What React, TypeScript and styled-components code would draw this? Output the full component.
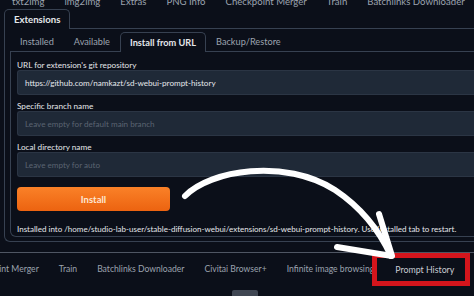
import styled, { createGlobalStyle } from 'styled-components';

const GlobalStyle = createGlobalStyle`
  html, body {
    margin: 0;
    padding: 0;
    background: #0b0f19;
    overflow: hidden;
  }
  body {
    font-family: Lato, "Noto Sans", sans-serif;
    color: #e5e7eb;
  }
`;

const Page = styled.div`
  position: relative;
  width: 474px;
  height: 296px;
  overflow: hidden;
  background: #0b0f19;
`;

const TabStrip = styled.div<{ $offset: number; $height: number }>`
  display: flex;
  align-items: center;
  margin-left: ${p => p.$offset}px;
  height: ${p => p.$height}px;
  white-space: nowrap;
`;

const TopStrip = styled(TabStrip)`
  margin-top: -7px;
`;

const TabItem = styled.div<{ $size?: number }>`
  padding: 0 10px;
  font-size: ${p => p.$size ?? 9.2}px;
  color: #9ca3af;
  flex-shrink: 0;
`;

const ExtRow = styled.div`
  display: flex;
  height: 20px;
  margin-left: 4px;
`;

const SelectedTab = styled.div<{ $size?: number }>`
  display: flex;
  align-items: center;
  padding: 0 9px;
  border: 1px solid #374151;
  border-bottom: none;
  border-radius: 5px 5px 0 0;
  font-size: ${p => p.$size ?? 9.2}px;
  font-weight: 700;
  color: #e5e7eb;
  flex-shrink: 0;
`;

const TabFill = styled.div`
  flex: 1;
  border-bottom: 1px solid #374151;
`;

const OuterPanel = styled.div`
  margin-left: 4px;
  width: 560px;
  height: 213px;
  border-left: 1px solid #374151;
  border-bottom: 1px solid #374151;
  border-bottom-left-radius: 6px;
  padding: 3px 0 0 5px;
  box-sizing: border-box;
`;

const InnerTabs = styled.div`
  display: flex;
  height: 20px;
  align-items: stretch;
`;

const InnerTab = styled.div`
  display: flex;
  align-items: center;
  padding: 0 10px;
  font-size: 9.2px;
  color: #9ca3af;
  border-bottom: 1px solid #374151;
  flex-shrink: 0;
`;

const InnerPanel = styled.div`
  border: 1px solid #374151;
  border-top: none;
  border-bottom-left-radius: 6px;
  padding: 0 0 0 6px;
  height: 185px;
  box-sizing: border-box;
`;

const Label = styled.div<{ $first?: boolean }>`
  padding-top: ${p => (p.$first ? 8 : 6)}px;
  line-height: 10px;
  height: 10px;
  font-size: 8.2px;
  color: #e5e7eb;
`;

const Input = styled.div<{ $placeholder?: boolean }>`
  height: 25px;
  display: flex;
  align-items: center;
  padding-left: 7px;
  background: #1f2937;
  border: 1px solid #2b3544;
  border-right: none;
  border-radius: 3px 0 0 3px;
  box-sizing: border-box;
  font-size: 8.1px;
  color: ${p => (p.$placeholder ? '#5b6472' : '#e5e7eb')};
`;

const InstallButton = styled.div`
  margin-top: 10px;
  width: 153px;
  height: 24px;
  border-radius: 4px;
  background: linear-gradient(to bottom, #fa8128, #ec6310);
  display: flex;
  align-items: center;
  justify-content: center;
  font-size: 9.5px;
  font-weight: 700;
  color: #fde6d2;
`;

const Status = styled.div`
  margin-top: 12px;
  font-size: 8px;
  line-height: 12px;
  white-space: nowrap;
  color: #e5e7eb;
`;

const BottomBar = styled.div`
  margin-top: 10px;
  border-top: 1px solid #4f5663;
`;

const MarkedTab = styled.div`
  position: relative;
  z-index: 1;
  margin-left: -12px;
  height: 33px;
  width: 98px;
  box-sizing: border-box;
  border: 5px solid #d4151c;
  background: #0b0f19;
  display: flex;
  align-items: center;
  padding-left: 18px;
  font-size: 8.8px;
  color: #c8ccd3;
  flex-shrink: 0;
`;

const Stub = styled.div`
  margin: 5px 0 0 232px;
  width: 26px;
  height: 6px;
  border-radius: 2px 2px 0 0;
  background: #3f4652;
`;

const Overlay = styled.svg`
  position: absolute;
  left: 0;
  top: 0;
  z-index: 2;
  pointer-events: none;
`;

export default function App() {
  const topTabs = ['txt2img', 'img2img', 'Extras', 'PNG Info', 'Checkpoint Merger', 'Train', 'Batchlinks Downloader', 'Civitai Browser+'];
  const bottomTabs = ['Checkpoint Merger', 'Train', 'Batchlinks Downloader', 'Civitai Browser+', 'Infinite image browsing'];

  return (
    <Page>
      <GlobalStyle />
      <TopStrip $offset={2} $height={16}>
        {topTabs.map(t => (
          <TabItem key={t} $size={9.6}>{t}</TabItem>
        ))}
      </TopStrip>

      <ExtRow>
        <SelectedTab $size={9.6}>Extensions</SelectedTab>
        <TabFill />
      </ExtRow>

      <OuterPanel>
        <InnerTabs>
          <InnerTab>Installed</InnerTab>
          <InnerTab>Available</InnerTab>
          <SelectedTab>Install from URL</SelectedTab>
          <InnerTab>Backup/Restore</InnerTab>
          <TabFill />
        </InnerTabs>
        <InnerPanel>
          <Label $first>URL for extension's git repository</Label>
          <Input>https://github.com/namkazt/sd-webui-prompt-history</Input>
          <Label>Specific branch name</Label>
          <Input $placeholder>Leave empty for default main branch</Input>
          <Label>Local directory name</Label>
          <Input $placeholder>Leave empty for auto</Input>
          <InstallButton>Install</InstallButton>
          <Status>
            Installed into /home/studio-lab-user/stable-diffusion-webui/extensions/sd-webui-prompt-history. Use Installed tab to restart.
          </Status>
        </InnerPanel>
      </OuterPanel>

      <BottomBar>
        <TabStrip $offset={-44} $height={32}>
          {bottomTabs.map(t => (
            <TabItem key={t} $size={8.6}>{t}</TabItem>
          ))}
          <MarkedTab>Prompt History</MarkedTab>
        </TabStrip>
      </BottomBar>
      <Stub />

      <Overlay width="474" height="296" viewBox="0 0 474 296">
        <path
          d="M185 196 C 210 170, 285 158, 335 190 C 362 208, 380 232, 391 256"
          fill="none"
          stroke="#ffffff"
          strokeWidth="6"
          strokeLinecap="round"
        />
        <path
          d="M379 214 L 392 256 L 337 247"
          fill="none"
          stroke="#ffffff"
          strokeWidth="6"
          strokeLinecap="round"
          strokeLinejoin="round"
        />
      </Overlay>
    </Page>
  );
}
